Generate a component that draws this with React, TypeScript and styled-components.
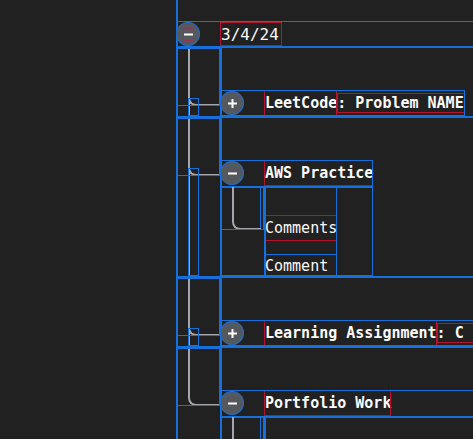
import styled, { createGlobalStyle, css } from 'styled-components';

const BLUE = '#1570dd';
const RED = '#b8132c';
const PINK = '#8e3560';
const RAIL = '#a3a7ad';
const BG = '#212121';

interface ITask {
  id: number;
  title: string;
  suffix?: string;
  open: boolean;
  comments?: string[];
}

const TASKS: ITask[] = [
  { id: 0, title: 'LeetCode', suffix: ': Problem NAME', open: false },
  { id: 1, title: 'AWS Practice', open: true, comments: ['Comment'] },
  {
    id: 2,
    title: 'Learning Assignment',
    suffix: ': C Programming Lab 3',
    open: false,
  },
  {
    id: 3,
    title: 'Portfolio Work',
    open: true,
    comments: ['Comment: finish the project gallery page'],
  },
];

const debug = (w = 1, c = BLUE) => css`
  outline: ${w}px solid ${c};
  outline-offset: -${w}px;
`;

function ToggleIcon({ open }: { open: boolean }) {
  return (
    <Glyph width="11" height="13" viewBox="0 0 11 13">
      <rect x="1" y="5.5" width="9" height="2" fill="#fff" />
      {!open && <rect x="4.5" y="2" width="2" height="9" fill="#fff" />}
    </Glyph>
  );
}

function Comments({ items }: { items: string[] }) {
  return (
    <SubRows>
      <SubConnector>
        <ElbowBox $h={44}>
          <Curve $w={27} />
        </ElbowBox>
      </SubConnector>
      <CommentCol>
        <CommentsItem>
          <CommentsTitle>Comments</CommentsTitle>
        </CommentsItem>
        {items.map((text, i) => (
          <CommentLine key={i}>{text}</CommentLine>
        ))}
      </CommentCol>
    </SubRows>
  );
}

export default function App() {
  return (
    <>
      <GlobalStyle />
      <Tree>
        <Header $root>
          <ToggleCell>
            <Toggle>
              <ToggleIcon open />
            </Toggle>
          </ToggleCell>
          <Title $root>3/4/24</Title>
        </Header>
        <div>
          {TASKS.map((task, i) => {
            const last = i === TASKS.length - 1;
            return (
              <Row key={task.id}>
                <Connector $rail={!last}>
                  <ElbowBox $h={58}>
                    <Curve />
                  </ElbowBox>
                  {!last && <Knee />}
                </Connector>
                <NodeCol>
                  <Node>
                    <Header>
                      <ToggleCell>
                        <Toggle>
                          <ToggleIcon open={task.open} />
                        </Toggle>
                      </ToggleCell>
                      <Title>{task.title}</Title>
                      {task.suffix && <Suffix>{task.suffix}</Suffix>}
                    </Header>
                    {task.open && task.comments && (
                      <Comments items={task.comments} />
                    )}
                  </Node>
                </NodeCol>
              </Row>
            );
          })}
        </div>
      </Tree>
    </>
  );
}

const GlobalStyle = createGlobalStyle`
  html, body {
    margin: 0;
    background: ${BG};
    overflow: hidden;
  }
  body {
    font-family: "DejaVu Sans Mono", "Liberation Mono", monospace;
    color: #fafafa;
  }
`;

const Tree = styled.div`
  margin-left: 176px;
  padding-top: 21px;
  min-height: 100vh;
  box-shadow: inset 2px 0 0 ${BLUE};
`;

const Header = styled.div<{ $root?: boolean }>`
  display: flex;
  align-items: center;
  box-sizing: border-box;
  height: ${(p) => (p.$root ? 27 : 26)}px;
  ${(p) =>
    p.$root &&
    css`
      border-top: 1px solid ${BLUE};
      border-bottom: 2px solid ${BLUE};
    `}
`;

const ToggleCell = styled.div`
  flex: none;
  width: 44px;
  display: flex;
  align-items: center;
`;

const Toggle = styled.div`
  width: 24px;
  height: 24px;
  border-radius: 50%;
  background: #55585d;
  display: grid;
  place-items: center;
  ${debug()}
`;

const Glyph = styled.svg`
  display: block;
  ${debug(1, PINK)}
`;

const Title = styled.span<{ $root?: boolean }>`
  flex: none;
  align-self: stretch;
  display: flex;
  align-items: center;
  padding: ${(p) => (p.$root ? '0 3px 0 1px' : '0 0 0 1px')};
  font-size: ${(p) => (p.$root ? 16 : 15)}px;
  font-weight: ${(p) => (p.$root ? 400 : 700)};
  white-space: pre;
  ${debug(1, RED)}
`;

const Suffix = styled.span`
  flex: none;
  display: block;
  line-height: 20px;
  padding-right: 1px;
  font-size: 15px;
  font-weight: 700;
  white-space: pre;
  ${debug(1, RED)}
`;

const Row = styled.div`
  display: grid;
  grid-template-columns: 44px 1fr;
  border-bottom: 2px solid ${BLUE};
`;

const Connector = styled.div<{ $rail: boolean }>`
  display: flex;
  flex-direction: column;
  background: ${(p) =>
    p.$rail
      ? `linear-gradient(${RAIL}, ${RAIL}) 12px 0 / 2px 100% no-repeat`
      : 'none'};
`;

const ElbowBox = styled.div<{ $h: number }>`
  flex: none;
  display: flex;
  box-sizing: border-box;
  height: ${(p) => p.$h}px;
  padding-left: 12px;
  ${debug()}
`;

const Curve = styled.div<{ $w?: number }>`
  flex: ${(p) => (p.$w ? 'none' : '1')};
  width: ${(p) => (p.$w ? `${p.$w}px` : 'auto')};
  border-left: 2px solid ${RAIL};
  border-bottom: 2px solid ${RAIL};
  border-bottom-left-radius: 8px;
  box-shadow: inset -1px 0 0 ${BLUE};
`;

const Knee = styled.div`
  flex: 1;
  width: 11px;
  margin: -8px 0 0 12px;
  ${debug()}
`;

const NodeCol = styled.div`
  min-width: 0;
  padding-top: 42px;
  box-shadow: inset 2px 0 0 ${BLUE};
`;

const Node = styled.div`
  display: flex;
  flex-direction: column;
  width: max-content;
  ${debug()}
`;

const SubRows = styled.div`
  display: grid;
  grid-template-columns: 44px max-content;
  box-shadow: inset 0 2px 0 ${BLUE};
`;

const SubConnector = styled.div`
  display: flex;
  flex-direction: column;
`;

const CommentCol = styled.div`
  display: flex;
  flex-direction: column;
  padding-left: 1px;
  box-shadow: inset 2px 0 0 ${BLUE}, inset -1px 0 0 ${BLUE};
`;

const CommentsItem = styled.div`
  padding: 29px 0 14px;
  ${debug()}
`;

const CommentsTitle = styled.div`
  height: 26px;
  display: flex;
  align-items: center;
  font-size: 15px;
  white-space: pre;
  box-shadow: inset 0 1px 0 ${RED}, inset 0 -1px 0 ${RED};
`;

const CommentLine = styled.div`
  height: 21px;
  display: flex;
  align-items: center;
  font-size: 15px;
  white-space: pre;
`;
